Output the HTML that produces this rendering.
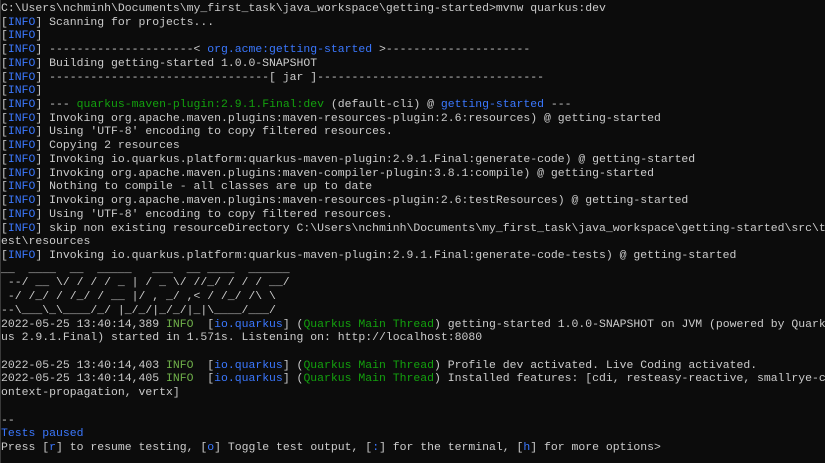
<!DOCTYPE html>
<html><head><meta charset="utf-8"><style>
html,body{margin:0;padding:0;background:#0c0c0c;width:825px;height:463px;overflow:hidden}
body{box-shadow:inset 1px 0 0 #3a3a3a}
pre{margin:0;padding:2px 0 0 1px;font-family:"Liberation Mono",monospace;font-size:11.46px;line-height:13.72px;color:#cccccc;white-space:pre}
.b{color:#3b78ff}.g{color:#13a10e}.y{color:#6fb04a}
</style></head><body><pre>C:\Users\nchminh\Documents\my_first_task\java_workspace\getting-started&gt;mvnw quarkus:dev
[<span class="b">INFO</span>] Scanning for projects...
[<span class="b">INFO</span>]
[<span class="b">INFO</span>] ---------------------&lt; <span class="b">org.acme:getting-started</span> &gt;---------------------
[<span class="b">INFO</span>] Building getting-started 1.0.0-SNAPSHOT
[<span class="b">INFO</span>] --------------------------------[ jar ]---------------------------------
[<span class="b">INFO</span>]
[<span class="b">INFO</span>] --- <span class="g">quarkus-maven-plugin:2.9.1.Final:dev</span> (default-cli) @ <span class="b">getting-started</span> ---
[<span class="b">INFO</span>] Invoking org.apache.maven.plugins:maven-resources-plugin:2.6:resources) @ getting-started
[<span class="b">INFO</span>] Using 'UTF-8' encoding to copy filtered resources.
[<span class="b">INFO</span>] Copying 2 resources
[<span class="b">INFO</span>] Invoking io.quarkus.platform:quarkus-maven-plugin:2.9.1.Final:generate-code) @ getting-started
[<span class="b">INFO</span>] Invoking org.apache.maven.plugins:maven-compiler-plugin:3.8.1:compile) @ getting-started
[<span class="b">INFO</span>] Nothing to compile - all classes are up to date
[<span class="b">INFO</span>] Invoking org.apache.maven.plugins:maven-resources-plugin:2.6:testResources) @ getting-started
[<span class="b">INFO</span>] Using 'UTF-8' encoding to copy filtered resources.
[<span class="b">INFO</span>] skip non existing resourceDirectory C:\Users\nchminh\Documents\my_first_task\java_workspace\getting-started\src\t
est\resources
[<span class="b">INFO</span>] Invoking io.quarkus.platform:quarkus-maven-plugin:2.9.1.Final:generate-code-tests) @ getting-started
__  ____  __  _____   ___  __ ____  ______
 --/ __ \/ / / / _ | / _ \/ //_/ / / / __/
 -/ /_/ / /_/ / __ |/ , _/ ,&lt; / /_/ /\ \
--\___\_\____/_/ |_/_/|_/_/|_|\____/___/
2022-05-25 13:40:14,389 <span class="y">INFO</span>  [<span class="b">io.quarkus</span>] (<span class="g">Quarkus Main Thread</span>) getting-started 1.0.0-SNAPSHOT on JVM (powered by Quark
us 2.9.1.Final) started in 1.571s. Listening on: http://localhost:8080

2022-05-25 13:40:14,403 <span class="y">INFO</span>  [<span class="b">io.quarkus</span>] (<span class="g">Quarkus Main Thread</span>) Profile dev activated. Live Coding activated.
2022-05-25 13:40:14,405 <span class="y">INFO</span>  [<span class="b">io.quarkus</span>] (<span class="g">Quarkus Main Thread</span>) Installed features: [cdi, resteasy-reactive, smallrye-c
ontext-propagation, vertx]

--
<span class="b">Tests paused</span>
Press [<span class="b">r</span>] to resume testing, [<span class="b">o</span>] Toggle test output, [<span class="b">:</span>] for the terminal, [<span class="b">h</span>] for more options&gt;</pre></body></html>
